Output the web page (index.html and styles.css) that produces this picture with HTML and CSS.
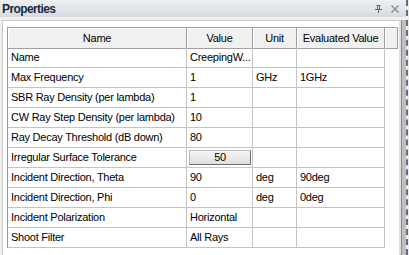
FILE: index.html
```html
<!DOCTYPE html>
<html lang="en">
<head>
    <meta charset="UTF-8">
    <title>Properties</title>
    <link rel="stylesheet" href="styles.css">
</head>
<body>
    <div class="window">
        <div class="pane">
            <div class="titlebar">
                <span class="title">Properties</span>
                <span class="icons">
                    <svg class="pin" width="7" height="8" viewBox="0 0 7 8">
                        <path d="M1.5 0.5h4 M2.5 0.5v4 M4.5 0.5v4 M0 4.5h7 M3.5 4.5v3.5" stroke="#666" stroke-width="1" fill="none"/>
                    </svg>
                    <svg class="close" width="8" height="8" viewBox="0 0 8 8">
                        <path d="M0.5 0.5l7 7 M7.5 0.5l-7 7" stroke="#8a8a8a" stroke-width="1.3" fill="none"/>
                    </svg>
                </span>
            </div>
            <div class="content">
                <div class="frame">
                    <div class="grid">
                        <div class="head">Name</div>
                        <div class="head">Value</div>
                        <div class="head">Unit</div>
                        <div class="head">Evaluated Value</div>
                        <div class="head"></div>

                        <div class="cell">Name</div>
                        <div class="cell">CreepingW...</div>
                        <div class="cell"></div>
                        <div class="cell"></div>
                        <div class="blank"></div>

                        <div class="cell">Max Frequency</div>
                        <div class="cell">1</div>
                        <div class="cell">GHz</div>
                        <div class="cell">1GHz</div>
                        <div class="blank"></div>

                        <div class="cell">SBR Ray Density (per lambda)</div>
                        <div class="cell">1</div>
                        <div class="cell"></div>
                        <div class="cell"></div>
                        <div class="blank"></div>

                        <div class="cell">CW Ray Step Density (per lambda)</div>
                        <div class="cell">10</div>
                        <div class="cell"></div>
                        <div class="cell"></div>
                        <div class="blank"></div>

                        <div class="cell">Ray Decay Threshold (dB down)</div>
                        <div class="cell">80</div>
                        <div class="cell"></div>
                        <div class="cell"></div>
                        <div class="blank"></div>

                        <div class="cell">Irregular Surface Tolerance</div>
                        <div class="cell btn-cell"><span class="btn">50</span></div>
                        <div class="cell"></div>
                        <div class="cell"></div>
                        <div class="blank"></div>

                        <div class="cell">Incident Direction, Theta</div>
                        <div class="cell">90</div>
                        <div class="cell">deg</div>
                        <div class="cell">90deg</div>
                        <div class="blank"></div>

                        <div class="cell">Incident Direction, Phi</div>
                        <div class="cell">0</div>
                        <div class="cell">deg</div>
                        <div class="cell">0deg</div>
                        <div class="blank"></div>

                        <div class="cell">Incident Polarization</div>
                        <div class="cell">Horizontal</div>
                        <div class="cell"></div>
                        <div class="cell"></div>
                        <div class="blank"></div>

                        <div class="cell">Shoot Filter</div>
                        <div class="cell">All Rays</div>
                        <div class="cell"></div>
                        <div class="cell"></div>
                        <div class="blank"></div>
                    </div>
                </div>
                <div class="bar"></div>
            </div>
        </div>
        <div class="edge"></div>
    </div>
</body>
</html>
```

FILE: styles.css
```css
body {
    margin: 0;
    font-family: "Liberation Sans", Arial, sans-serif;
    font-size: 11px;
    color: #000;
    background: #f0f0f0;
}

.window {
    display: flex;
    width: 409px;
    height: 255px;
    overflow: hidden;
}

.pane {
    width: 406px;
    display: flex;
    flex-direction: column;
}

.edge {
    width: 1px;
    border-left: 2px dashed #5f6f8a;
    background: #ececec;
}

/* Заголовок панели */
.titlebar {
    height: 17px;
    display: flex;
    align-items: center;
    justify-content: space-between;
    padding-left: 2px;
    background: linear-gradient(#eef0f3, #d6dadf);
}

.title {
    font-weight: bold;
    font-size: 12px;
    color: #1b2a40;
    letter-spacing: -0.6px;
}

.icons {
    display: flex;
    align-items: center;
    gap: 9px;
    padding-right: 7px;
}

.content {
    flex: 1;
    display: flex;
    padding: 3px 0 0 2px;
}

.frame {
    flex: 1;
    background: #fff;
    border-left: 1px solid #c8c8c8;
    border-top: 1px solid #c8c8c8;
    border-right: 2px solid #e0e0e0;
    padding: 6px 0 0 4px;
}

.bar {
    width: 4px;
    border-left: 1px solid #888;
    background: #c0c0c0;
}

/* Таблица свойств */
.grid {
    display: grid;
    grid-template-columns: 179px 66px 44px 88px 13px;
    grid-auto-rows: 20px;
    border-left: 1px solid #9a9a9a;
    border-top: 1px solid #a0a0a0;
    width: max-content;
    letter-spacing: -0.25px;
}

.head {
    height: 21px;
    box-sizing: border-box;
    background: #f0f0f0;
    border-right: 1px solid #a0a0a0;
    border-bottom: 1px solid #a0a0a0;
    box-shadow: inset 1px 1px #fff;
    text-align: center;
    line-height: 20px;
    white-space: nowrap;
}

.cell {
    box-sizing: border-box;
    border-right: 1px solid #c4c4c4;
    border-bottom: 1px solid #c4c4c4;
    padding-left: 3px;
    line-height: 19px;
    white-space: nowrap;
    overflow: hidden;
}

.btn-cell {
    padding: 2px 0 0 2px;
}

.btn {
    display: block;
    width: 62px;
    height: 15px;
    box-sizing: border-box;
    background: linear-gradient(#f6f6f6, #dedede);
    border: 1px solid #b8b8b8;
    border-right-color: #6e6e6e;
    border-bottom-color: #6e6e6e;
    text-align: center;
    line-height: 13px;
}
```
